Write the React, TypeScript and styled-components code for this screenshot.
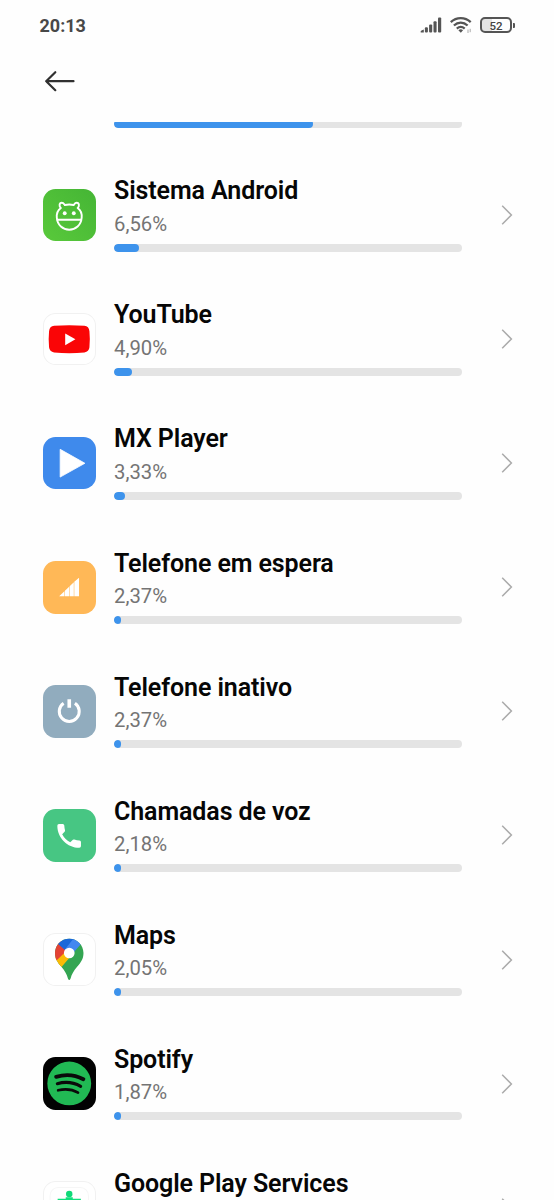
import React from "react";
import styled, { createGlobalStyle } from "styled-components";

const GlobalStyle = createGlobalStyle`
  * { box-sizing: border-box; }
  body {
    margin: 0;
    background: #fefefe;
    font-family: Roboto, "Liberation Sans", sans-serif;
  }
`;

const Screen = styled.main`
  width: 554px;
  height: 1200px;
  overflow: hidden;
  display: flex;
  flex-direction: column;
  background: #fefefe;
`;

const StatusBar = styled.div`
  height: 50px;
  flex: none;
  display: flex;
  align-items: center;
  justify-content: space-between;
  padding: 0 39px 0 39.5px;
`;

const Clock = styled.span`
  font-size: 18px;
  font-weight: 700;
  line-height: 24px;
  padding-top: 1px;
  color: #484848;
`;

const StatusIcons = styled.div`
  display: flex;
  align-items: center;
  gap: 8px;
`;

const BatteryShell = styled.div`
  display: flex;
  align-items: center;
  gap: 1px;
`;

const BatteryBody = styled.div`
  width: 32px;
  height: 16px;
  border: 2px solid #555;
  border-radius: 5px;
  background: linear-gradient(90deg, #e4e4e4 34%, #fefefe 34%);
  display: flex;
  align-items: center;
  justify-content: center;
  padding-top: 1px;
  font-size: 11.5px;
  font-weight: 500;
  line-height: 12px;
  color: #444;
`;

const BatteryTip = styled.div`
  width: 2px;
  height: 5px;
  border-radius: 0 1px 1px 0;
  background: #555;
`;

const Header = styled.header`
  height: 72px;
  flex: none;
  padding: 20px 0 0 44px;
`;

const BackButton = styled.button`
  display: block;
  padding: 0;
  border: 0;
  background: none;
  svg { display: block; }
`;

const List = styled.div`
  flex: 1;
  min-height: 0;
  overflow: hidden;
`;

const ScrolledRow = styled.div`
  height: 30.95px;
  padding-left: 114px;
`;

const ScrolledClip = styled.div`
  height: 6px;
  overflow: hidden;
  display: flex;
  align-items: flex-end;
`;

const Row = styled.div`
  height: 124.1px;
  display: flex;
  align-items: center;
  padding: 0 41px 0 43px;
`;

const Tile = styled.div<{ $bg: string; $outlined?: boolean }>`
  width: 52.5px;
  height: 52.5px;
  flex: none;
  border-radius: 12.5px;
  overflow: hidden;
  background: ${(p) => p.$bg};
  box-shadow: ${(p) => (p.$outlined ? "inset 0 0 0 1px #f1f1f1" : "none")};
  svg { display: block; width: 100%; height: 100%; }
`;

const Body = styled.div`
  width: 347.5px;
  margin-left: 18.5px;
  height: 100%;
  padding-top: 22.3px;
  flex: none;
`;

const Name = styled.div`
  font-size: 25px;
  font-weight: 600;
  line-height: 32px;
  letter-spacing: -0.1px;
  color: #060606;
  white-space: nowrap;
`;

const Percent = styled.div`
  margin-top: 4.5px;
  font-size: 20.3px;
  line-height: 24px;
  color: #747474;
`;

const Track = styled.div`
  width: 347.5px;
  height: 8px;
  flex: none;
  border-radius: 4px;
  background: #e4e4e4;
  overflow: hidden;
`;

const Fill = styled.div<{ $width: number }>`
  width: ${(p) => p.$width}px;
  height: 100%;
  border-radius: 4px;
  background: #3d93ec;
`;

const Meter = styled.div`
  margin-top: 7.8px;
`;

const Arrow = styled.div`
  margin-left: auto;
  svg { display: block; }
`;

const AndroidIcon = () => (
  <svg viewBox="0 0 52 52" fill="none" stroke="#fff" strokeWidth="1.9" strokeLinecap="round" strokeLinejoin="round">
    <path d="M13.700 28.500C13.300 24.500 14.500 21 17.700 18.800C15.800 17.500 15.900 13.700 18.600 13.700C20.400 13.700 20.900 15 21.600 15.900C24.300 15.300 27.700 15.300 30.400 15.900C31.100 15 31.600 13.700 33.400 13.700C36.100 13.700 36.200 17.500 34.300 18.800C37.500 21 38.700 24.500 38.300 28.500C37.700 35.900 32.300 40.300 26 40.300S14.300 35.900 13.700 28.500Z" />
    <path d="M14.300 30.400H37.700" />
    <circle cx="21.500" cy="24" r="1.900" fill="#fff" stroke="none" />
    <circle cx="30.500" cy="24" r="1.900" fill="#fff" stroke="none" />
  </svg>
);

const YouTubeIcon = () => (
  <svg viewBox="0 0 52 52">
    <path d="M11 12.700Q26 11.400 41 12.700Q45.500 13.200 46 18Q46.800 26 46 34Q45.500 38.600 41 39Q26 40.600 11 39Q6.500 38.600 6 34Q5.200 26 6 18Q6.500 13.200 11 12.700Z" fill="#fa0506" />
    <path d="M22 20.200V32L32.100 26.100Z" fill="#fff" />
  </svg>
);

const PlayIcon = () => (
  <svg viewBox="0 0 52 52">
    <path d="M17 12.200V39.700L41.500 26Z" fill="#fff" stroke="#fff" strokeWidth=".8" strokeLinejoin="round" />
  </svg>
);

const StandbyIcon = () => (
  <svg viewBox="0 0 52 52" fill="#fff">
    <path d="M16 35L21.200 29.900V35ZM21.700 29.400L25.900 25.400V35H21.700ZM26.400 24.900L30.500 21V35H26.400ZM31 20.500L35.700 16.500V35H31Z" />
  </svg>
);

const PowerIcon = () => (
  <svg viewBox="0 0 52 52" fill="none" stroke="#fff" strokeWidth="3">
    <path d="M20.400 18A9.900 9.900 0 1 0 31.600 18" />
    <path d="M26 14V22.600" strokeWidth="3.600" />
  </svg>
);

const PhoneIcon = () => (
  <svg viewBox="0 0 52 52">
    <path d="M14.200 16.500Q14.200 14.900 15.800 14.900H19.600Q21 14.900 21.100 16.400Q21.200 19 21.800 21Q22 21.900 21.400 22.500L19 25Q21.700 30.200 27 33L29.600 30.400Q30.200 29.900 31 30.200Q33.500 31 36.200 31.100Q37.600 31.200 37.600 32.600V36.600Q37.600 38.400 36 38.400C24 38.400 14.200 28.500 14.200 16.500Z" fill="#fff" />
  </svg>
);

const MapsIcon = () => (
  <svg viewBox="0 0 52 52">
    <defs>
      <clipPath id="pin">
        <path d="M26 5.600C18 5.600 11.900 11.900 11.900 19.800C11.900 25.500 14.300 28.900 18 33.200C21.600 37.500 23.500 40.500 24.700 45Q26 48 27.300 45C28.500 40.500 30.400 37.500 34 33.200C37.700 28.900 40.100 25.500 40.100 19.800C40.100 11.900 34 5.600 26 5.600Z" />
      </clipPath>
    </defs>
    <g clipPath="url(#pin)">
      <path d="M8 0H46V50H8Z" fill="#34a552" />
      <path d="M5 40L14 20L26 14L30 20L17.300 35L15 40Z" fill="#fbbb07" />
      <path d="M8 8H20L24 17L12.500 28L5 29Z" fill="#e44335" />
      <path d="M14.300 10.500L22 17L31.500 5.500L26 2H14Z" fill="#1b68d9" />
      <path d="M31 4.500L37.800 10.700L28 22L21.500 16.500Z" fill="#4387f0" />
    </g>
    <circle cx="26" cy="19.800" r="5.300" fill="#fff" />
  </svg>
);

const SpotifyIcon = () => (
  <svg viewBox="0 0 52 52" fill="none" stroke="#0a0a0a" strokeLinecap="round">
    <circle cx="26" cy="26.200" r="21.700" fill="#21b954" stroke="none" />
    <path d="M13 19.600C22 17 32 17.800 40 22" strokeWidth="3.800" />
    <path d="M14.200 26.400C22 24.200 30.500 25.200 37.300 29" strokeWidth="3.100" />
    <path d="M15 33C22 31.200 29 32 34.700 35.200" strokeWidth="2.600" />
  </svg>
);

const ServicesIcon = () => (
  <svg viewBox="0 0 52 52">
    <rect x="7" y="6.500" width="38" height="40" rx="8" fill="none" stroke="#f6f6f6" strokeWidth="1" />
    <circle cx="26" cy="12.800" r="3.200" fill="#10d978" />
    <path d="M22.500 16H29.500V17.500H37.500V29H14.500V17.500H22.500Z" fill="#10e07c" />
  </svg>
);

const Chevron = () => (
  <svg width="12" height="20" viewBox="0 0 12 20" fill="none" stroke="#ababab" strokeWidth="1.5">
    <path d="M1.200 .8L10.400 10L1.200 19.200" />
  </svg>
);

const SignalIcon = () => (
  <svg width="22" height="16" viewBox="0 0 22 16" fill="#555">
    <path d="M.5 14.700Q.7 13.500 3.800 12.500V15.400H1Q.5 15.400 .5 14.700Z" />
    <rect x="4.900" y="10.300" width="3" height="5.100" rx="1" />
    <rect x="9.100" y="7.600" width="3.100" height="7.800" rx="1" />
    <rect x="13.500" y="4.300" width="3.100" height="11.100" rx="1" />
    <rect x="18" y=".6" width="3.200" height="14.800" rx="1" />
  </svg>
);

const WifiIcon = () => (
  <svg width="22" height="18" viewBox="0 0 22 18" fill="none" stroke="#555" strokeWidth="2.300">
    <path d="M.8 6.200C6.500 .8 15 .8 20.700 6.200" />
    <path d="M3.900 9.500C8 5.700 13.500 5.700 17.600 9.500" />
    <path d="M6.800 12.600C9.300 10.400 12.200 10.400 14.700 12.600" />
    <path d="M8.400 14.200Q10.800 12.500 13.100 14.200L10.800 16.700Z" fill="#555" stroke="none" />
    <path d="M18 13.500V17M20.200 12.800V16.200" strokeWidth="1" stroke="#aaa" />
  </svg>
);

const apps = [
  { name: "Sistema Android", percent: "6,56%", fill: 24.5, bg: "linear-gradient(45deg, #59c93b, #45b535)", Icon: AndroidIcon },
  { name: "YouTube", percent: "4,90%", fill: 17.5, bg: "#fff", outlined: true, Icon: YouTubeIcon },
  { name: "MX Player", percent: "3,33%", fill: 11, bg: "#3f8aec", Icon: PlayIcon },
  { name: "Telefone em espera", percent: "2,37%", fill: 7.2, bg: "#ffb857", Icon: StandbyIcon },
  { name: "Telefone inativo", percent: "2,37%", fill: 7.2, bg: "#91acbe", Icon: PowerIcon },
  { name: "Chamadas de voz", percent: "2,18%", fill: 7.2, bg: "#47c683", Icon: PhoneIcon },
  { name: "Maps", percent: "2,05%", fill: 7.2, bg: "#fff", outlined: true, Icon: MapsIcon },
  { name: "Spotify", percent: "1,87%", fill: 7.2, bg: "#020202", Icon: SpotifyIcon },
  { name: "Google Play Services", percent: "", fill: 7.2, bg: "#fff", outlined: true, Icon: ServicesIcon },
];

export default function App() {
  return (
    <Screen>
      <GlobalStyle />
      <StatusBar>
        <Clock>20:13</Clock>
        <StatusIcons>
          <SignalIcon />
          <WifiIcon />
          <BatteryShell>
            <BatteryBody>52</BatteryBody>
            <BatteryTip />
          </BatteryShell>
        </StatusIcons>
      </StatusBar>
      <Header>
        <BackButton aria-label="Voltar">
          <svg width="32" height="22" viewBox="0 0 32 22" fill="none" stroke="#303030" strokeWidth="2.200" strokeLinecap="round" strokeLinejoin="round">
            <path d="M29.500 11.200H2.200M11.300 2.200L2.200 11.200L11.300 20.200" />
          </svg>
        </BackButton>
      </Header>
      <List>
        <ScrolledRow>
          <ScrolledClip>
            <Track>
              <Fill $width={198.5} />
            </Track>
          </ScrolledClip>
        </ScrolledRow>
        {apps.map(({ name, percent, fill, bg, outlined, Icon }) => (
          <Row key={name}>
            <Tile $bg={bg} $outlined={outlined}>
              <Icon />
            </Tile>
            <Body>
              <Name>{name}</Name>
              <Percent>{percent}</Percent>
              <Meter>
                <Track>
                  <Fill $width={fill} />
                </Track>
              </Meter>
            </Body>
            <Arrow>
              <Chevron />
            </Arrow>
          </Row>
        ))}
      </List>
    </Screen>
  );
}
